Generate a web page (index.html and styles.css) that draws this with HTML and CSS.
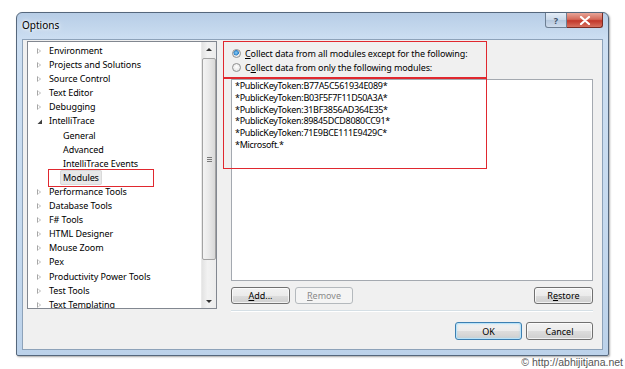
FILE: index.html
```html
<!DOCTYPE html>
<html lang="en">
<head>
<meta charset="UTF-8" />
<title>Options</title>
<link rel="stylesheet" href="styles.css">
</head>
<body>

  <div class="window">
    <div class="titlebar">
      <div class="title">Options</div>
      <div class="caption-btns">
        <div class="cap help">?</div>
        <div class="cap close">
          <svg width="12" height="9" viewBox="0 0 12 9"><path d="M2 1 L10 8 M10 1 L2 8" stroke="#fff" stroke-width="2.2" stroke-linecap="round"/></svg>
        </div>
      </div>
    </div>

    <div class="client">
      <div class="tree">
        <div class="tree-list">
          <div class="node"><span class="arrow"></span>Environment</div>
          <div class="node"><span class="arrow"></span>Projects and Solutions</div>
          <div class="node"><span class="arrow"></span>Source Control</div>
          <div class="node"><span class="arrow"></span>Text Editor</div>
          <div class="node"><span class="arrow"></span>Debugging</div>
          <div class="node"><span class="arrow open"></span>IntelliTrace</div>
          <div class="node child">General</div>
          <div class="node child">Advanced</div>
          <div class="node child">IntelliTrace Events</div>
          <div class="node child"><span class="selected">Modules</span></div>
          <div class="node"><span class="arrow"></span>Performance Tools</div>
          <div class="node"><span class="arrow"></span>Database Tools</div>
          <div class="node"><span class="arrow"></span>F# Tools</div>
          <div class="node"><span class="arrow"></span>HTML Designer</div>
          <div class="node"><span class="arrow"></span>Mouse Zoom</div>
          <div class="node"><span class="arrow"></span>Pex</div>
          <div class="node"><span class="arrow"></span>Productivity Power Tools</div>
          <div class="node"><span class="arrow"></span>Test Tools</div>
          <div class="node"><span class="arrow"></span>Text Templating</div>
        </div>
        <div class="scrollbar">
          <div class="sb-arrow up"></div>
          <div class="sb-track">
            <div class="sb-thumb"><span class="grip"></span></div>
          </div>
          <div class="sb-arrow down"></div>
        </div>
        <div class="mark mark-modules"></div>
      </div>

      <div class="panel">
        <div class="radio-group">
          <label class="radio-row"><span class="radio checked"></span><span><u>C</u>ollect data from all modules except for the following:</span></label>
          <label class="radio-row"><span class="radio"></span><span>C<u>o</u>llect data from only the following modules:</span></label>
        </div>
        <div class="module-list">
          <div>*PublicKeyToken:B77A5C561934E089*</div>
          <div>*PublicKeyToken:B03F5F7F11D50A3A*</div>
          <div>*PublicKeyToken:31BF3856AD364E35*</div>
          <div>*PublicKeyToken:89845DCD8080CC91*</div>
          <div>*PublicKeyToken:71E9BCE111E9429C*</div>
          <div>*Microsoft.*</div>
        </div>
        <div class="mark mark-list"></div>
        <div class="btn-row">
          <button class="btn"><u>A</u>dd...</button>
          <button class="btn disabled"><u>R</u>emove</button>
          <span class="spacer"></span>
          <button class="btn">R<u>e</u>store</button>
        </div>
        <div class="separator"></div>
        <div class="btn-row dialog-btns">
          <button class="btn btn-wide default">OK</button>
          <button class="btn btn-wide">Cancel</button>
        </div>
      </div>
    </div>
  </div>

  <div class="credit">© http://abhijitjana.net</div>

</body>
</html>
```

FILE: styles.css
```css
body {
  margin: 0;
  background: #fff;
  font-family: "Noto Sans", "Open Sans", sans-serif;
  font-size: 9px;
  color: #000;
}
.window {
  margin: 12px 0 0 16px;
  width: 593px;
  height: 344px;
  box-sizing: border-box;
  border: 1px solid #55677c;
  border-radius: 6px 6px 2px 2px;
  background: linear-gradient(to bottom, #b7cde6 0%, #cddff2 8%, #c6daef 60%, #bcd2ea 100%);
  padding: 0 5px 5px;
  display: flex;
  flex-direction: column;
  box-shadow: 1px 1px 2px rgba(0, 0, 0, 0.35);
}
.titlebar {
  height: 26px;
  display: flex;
  justify-content: space-between;
  align-items: flex-start;
}
.title {
  font-size: 10px;
  margin-top: 5px;
  text-shadow: 0 0 6px #fff, 0 0 3px #fff;
}
.caption-btns {
  display: flex;
}
.cap {
  height: 15px;
  box-sizing: border-box;
  border: 1px solid #6d7f93;
  border-top: none;
  display: flex;
  align-items: center;
  justify-content: center;
}
.help {
  width: 22px;
  border-radius: 0 0 0 3px;
  background: linear-gradient(to bottom, #e4edf7 0%, #c9d8e9 50%, #b5c8de 51%, #cfdcec 100%);
  color: #3d4f66;
  font-size: 9px;
  font-weight: bold;
}
.close {
  width: 36px;
  border-color: #7a2b23;
  border-left: none;
  border-radius: 0 0 3px 0;
  background: linear-gradient(to bottom, #e8a598 0%, #d46a5a 45%, #c2372a 55%, #d7705e 100%);
}
.client {
  flex: 1;
  background: #f0f0f0;
  border: 1px solid #8da2b9;
  display: grid;
  grid-template-columns: 190px 362px;
  column-gap: 14px;
  padding: 1px 9px 0 4px;
}
.tree {
  position: relative;
  height: 268px;
  box-sizing: border-box;
  border: 1px solid #828790;
  background: #fff;
  display: flex;
}
.tree-list {
  flex: 1;
  overflow: hidden;
  padding-top: 2px;
  letter-spacing: -0.08px;
}
.node {
  height: 14.1px;
  line-height: 14.1px;
  padding-left: 21px;
  position: relative;
  white-space: nowrap;
}
.node.child {
  padding-left: 35px;
}
.arrow {
  position: absolute;
  left: 9px;
  top: 4px;
  width: 0;
  height: 0;
  border-top: 3.5px solid transparent;
  border-bottom: 3.5px solid transparent;
  border-left: 4px solid #a6a6a6;
}
.arrow::after {
  content: "";
  position: absolute;
  left: -3px;
  top: -2px;
  border-top: 2px solid transparent;
  border-bottom: 2px solid transparent;
  border-left: 2px solid #fff;
}
.arrow.open {
  left: 9px;
  top: 5px;
  border: none;
  width: 5px;
  height: 5px;
  background: #404040;
  clip-path: polygon(100% 0, 100% 100%, 0 100%);
}
.arrow.open::after {
  display: none;
}
.selected {
  background: #e8e8e8;
  border: 1px solid #dadada;
  border-radius: 2px;
  padding: 0 2px;
  margin-left: -3px;
}
.scrollbar {
  width: 14px;
  background: linear-gradient(to right, #e3e3e3, #f2f2f2 40%, #ececec);
  display: flex;
  flex-direction: column;
  border-left: 1px solid #eaeaea;
}
.sb-arrow {
  height: 15px;
  position: relative;
}
.sb-arrow::after {
  content: "";
  position: absolute;
  left: 4px;
  border-left: 3px solid transparent;
  border-right: 3px solid transparent;
}
.sb-arrow.up::after {
  top: 6px;
  border-bottom: 3px solid #333;
}
.sb-arrow.down::after {
  top: 7px;
  border-top: 3px solid #333;
}
.sb-track {
  flex: 1;
  padding: 1px 0 33px;
}
.sb-thumb {
  height: 100%;
  box-sizing: border-box;
  border: 1px solid #a3a3a3;
  border-radius: 2px;
  background: linear-gradient(to right, #f4f4f4, #e9e9e9 50%, #d8d8d8);
  display: flex;
  align-items: center;
  justify-content: center;
}
.grip {
  width: 5px;
  height: 5px;
  background: repeating-linear-gradient(to bottom, #7a7a7a 0, #7a7a7a 1px, transparent 1px, transparent 2px);
}
.mark {
  position: absolute;
  border: 1px solid #e0282f;
  pointer-events: none;
}
.mark-modules {
  left: 20px;
  top: 127px;
  width: 104px;
  height: 16px;
}
.panel {
  position: relative;
  display: flex;
  flex-direction: column;
}
.radio-group {
  margin-left: -8px;
  width: 264px;
  height: 37px;
  box-sizing: border-box;
  border: 1px solid #e0282f;
  padding: 4px 0 0 8px;
  letter-spacing: -0.1px;
}
.radio-row {
  display: flex;
  align-items: center;
  height: 14.5px;
  gap: 4px;
  white-space: nowrap;
}
.radio {
  width: 9px;
  height: 9px;
  box-sizing: border-box;
  border-radius: 50%;
  border: 1px solid #8f8f8f;
  background: radial-gradient(circle at 50% 40%, #ffffff, #dcdcdc);
  flex: none;
}
.radio.checked {
  background: radial-gradient(circle at 45% 40%, #8ed0f7 0, #2a7fc8 45%, #e8e8e8 50%, #f4f4f4 100%);
}
.module-list {
  margin-top: 1px;
  height: 202px;
  box-sizing: border-box;
  border: 1px solid #a4a9b0;
  background: #fff;
  padding: 0 3px;
  line-height: 11.8px;
  letter-spacing: -0.3px;
}
.mark-list {
  left: -8px;
  top: 37px;
  width: 262px;
  height: 89px;
}
.btn-row {
  display: flex;
  gap: 5px;
  margin-top: 6px;
}
.spacer {
  flex: 1;
}
.btn {
  width: 59px;
  height: 17px;
  box-sizing: border-box;
  font: inherit;
  padding: 0;
  color: #000;
  border: 1px solid #707070;
  border-radius: 3px;
  background: linear-gradient(to bottom, #f2f2f2 0%, #ebebeb 50%, #dddddd 51%, #cfcfcf 100%);
  box-shadow: inset 0 0 0 1px rgba(255, 255, 255, 0.7);
}
.btn.disabled {
  width: 58px;
  color: #8a8a8a;
  border-color: #b4b9bd;
  background: #f4f4f4;
  box-shadow: none;
}
.separator {
  margin-top: 6px;
  height: 1px;
  background: #d5dfe5;
  border-bottom: 1px solid #fff;
}
.dialog-btns {
  margin-top: 10px;
  justify-content: flex-end;
  gap: 4px;
}
.btn-wide {
  width: 67px;
  height: 18px;
}
.btn.default {
  border-color: #3c7fb1;
  box-shadow: inset 0 0 0 1px #b9e3f9, inset 0 0 3px #8fd3f5;
}
.credit {
  text-align: right;
  padding-right: 2px;
  font-family: "Liberation Sans", Arial, sans-serif;
  font-size: 10.5px;
  color: #555;
  line-height: 13px;
}
```
